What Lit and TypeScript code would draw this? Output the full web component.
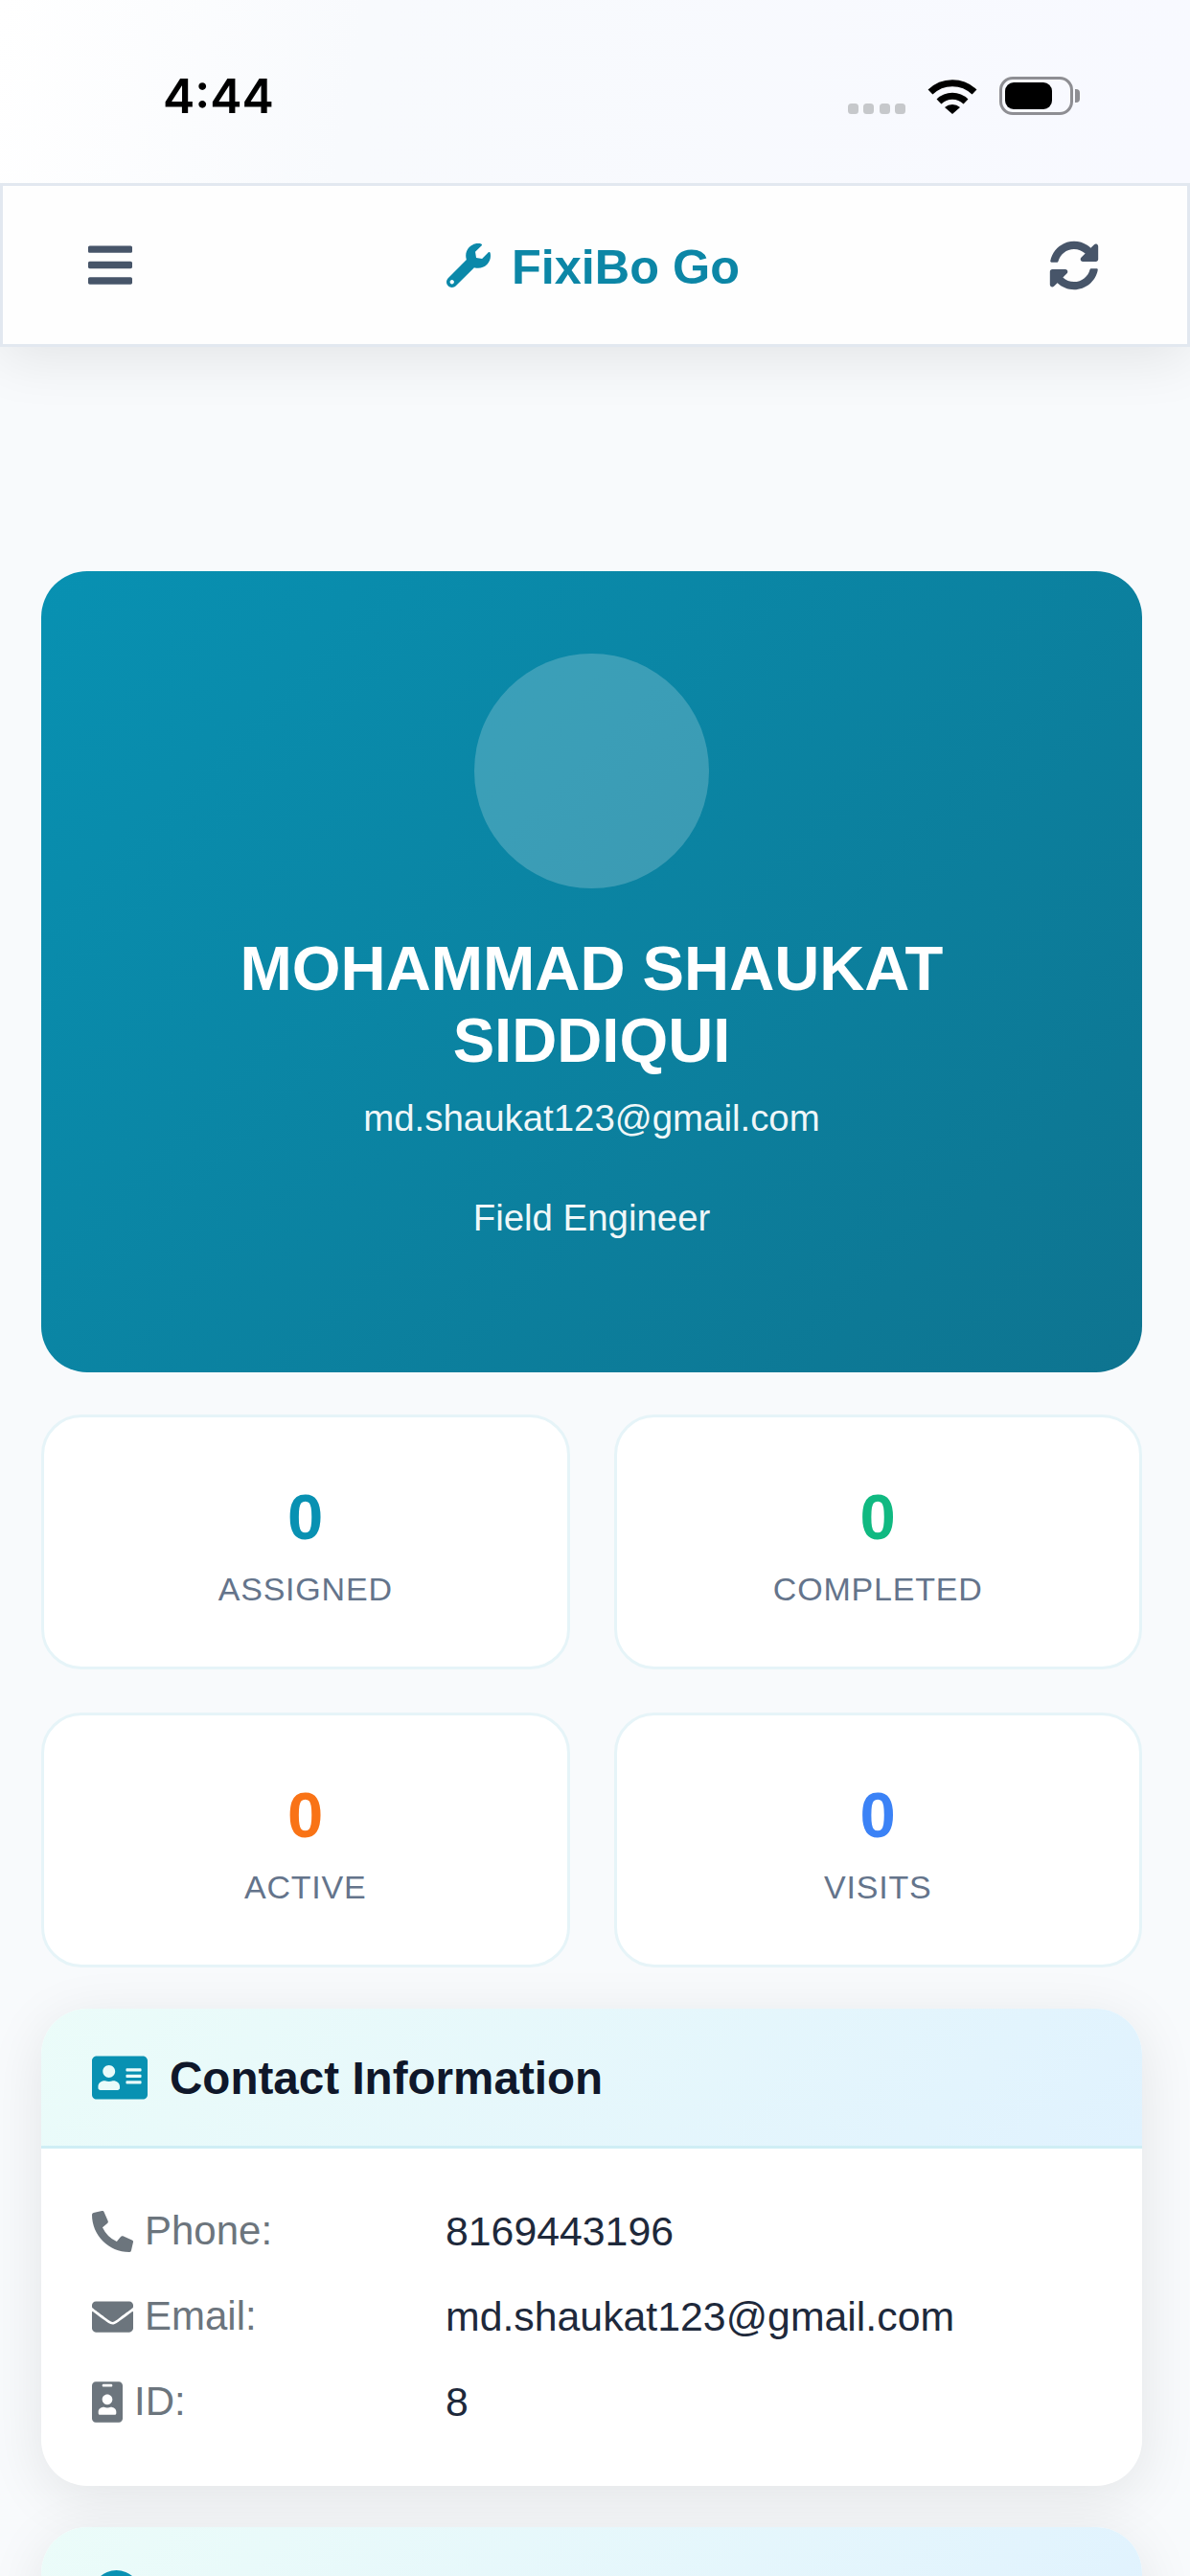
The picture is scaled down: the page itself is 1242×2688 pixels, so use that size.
import { LitElement, html, css, svg } from "lit";
import { customElement } from "lit/decorators.js";

const PATHS = {
  bars: "M16 132h416c8.837 0 16-7.163 16-16V76c0-8.837-7.163-16-16-16H16C7.163 60 0 67.163 0 76v40c0 8.837 7.163 16 16 16zm0 160h416c8.837 0 16-7.163 16-16v-40c0-8.837-7.163-16-16-16H16c-8.837 0-16 7.163-16 16v40c0 8.837 7.163 16 16 16zm0 160h416c8.837 0 16-7.163 16-16v-40c0-8.837-7.163-16-16-16H16c-8.837 0-16 7.163-16 16v40c0 8.837 7.163 16 16 16z",
  wrench: "M507.73 109.1c-2.24-9.03-13.54-12.09-20.12-5.51l-74.36 74.36-67.88-11.31-11.31-67.88 74.36-74.36c6.62-6.62 3.43-17.9-5.66-20.16-47.38-11.74-99.55.91-136.58 37.93-39.64 39.64-50.55 97.1-34.05 147.2L18.74 402.76c-24.99 24.99-24.99 65.51 0 90.5 24.99 24.99 65.51 24.99 90.5 0l213.21-213.21c50.12 16.71 107.47 5.68 147.37-34.22 37.07-37.07 49.7-89.32 37.91-136.73zM64 472c-13.25 0-24-10.75-24-24 0-13.26 10.75-24 24-24s24 10.74 24 24c0 13.25-10.75 24-24 24z",
  sync: "M370.72 133.28C339.458 104.008 298.888 87.962 255.848 88c-77.458.068-144.328 53.178-162.791 126.85-1.344 5.363-6.122 9.15-11.651 9.15H24.103c-7.498 0-13.194-6.807-11.807-14.176C33.933 94.924 134.813 8 256 8c66.448 0 126.791 26.136 171.315 68.685L463.03 40.97C478.149 25.851 504 36.559 504 57.941V192c0 13.255-10.745 24-24 24H345.941c-21.382 0-32.09-25.851-16.971-40.971l41.75-41.749zM32 296h134.059c21.382 0 32.09 25.851 16.971 40.971l-41.75 41.75c31.262 29.273 71.835 45.319 114.876 45.28 77.418-.07 144.315-53.144 162.787-126.849 1.344-5.363 6.122-9.15 11.651-9.15h57.304c7.498 0 13.194 6.807 11.807 14.176C478.067 417.076 377.187 504 256 504c-66.448 0-126.791-26.136-171.315-68.685L48.97 471.03C33.851 486.149 8 475.441 8 454.059V320c0-13.255 10.745-24 24-24z",
  phone: "M497.39 361.8l-112-48a24 24 0 0 0-28 6.9l-49.6 60.6A370.66 370.66 0 0 1 130.6 204.11l60.6-49.6a23.94 23.94 0 0 0 6.9-28l-48-112A24.16 24.16 0 0 0 122.6.61l-104 24A24 24 0 0 0 0 48c0 256.5 207.9 464 464 464a24 24 0 0 0 23.4-18.6l24-104a24.29 24.29 0 0 0-14.01-27.6z",
  envelope: "M502.3 190.8c3.9-3.1 9.7-.2 9.7 4.7V400c0 26.5-21.5 48-48 48H48c-26.5 0-48-21.5-48-48V195.6c0-5 5.7-7.8 9.7-4.7 22.4 17.4 52.1 39.5 154.1 113.6 21.1 15.4 56.7 47.8 92.2 47.6 35.7.3 72-32.8 92.3-47.6 102-74.1 131.6-96.3 154-113.7zM256 320c23.2.4 56.6-29.2 73.4-41.4 132.7-96.3 142.8-104.7 173.4-128.7 5.8-4.5 9.2-11.5 9.2-18.9v-19c0-26.5-21.5-48-48-48H48C21.5 64 0 85.5 0 112v19c0 7.4 3.4 14.3 9.2 18.9 30.6 23.9 40.7 32.4 173.4 128.7 16.8 12.2 50.2 41.8 73.4 41.4z",
  badge: "M336 0H48C21.5 0 0 21.5 0 48v416c0 26.5 21.5 48 48 48h288c26.5 0 48-21.5 48-48V48c0-26.5-21.5-48-48-48zM144 32h96c8.8 0 16 7.2 16 16s-7.2 16-16 16h-96c-8.8 0-16-7.2-16-16s7.2-16 16-16zm48 128c35.3 0 64 28.7 64 64s-28.7 64-64 64-64-28.7-64-64 28.7-64 64-64zm112 236.8c0 10.6-10 19.2-22.4 19.2H102.4C90 416 80 407.4 80 396.8v-19.2c0-31.8 30.1-57.6 67.2-57.6h5c12.3 5.1 25.7 8 39.8 8s27.6-2.9 39.8-8h5c37.1 0 67.2 25.8 67.2 57.6v19.2z",
  card: "M528 32H48C21.5 32 0 53.5 0 80v352c0 26.5 21.5 48 48 48h480c26.5 0 48-21.5 48-48V80c0-26.5-21.5-48-48-48zM176 128c35.3 0 64 28.7 64 64s-28.7 64-64 64-64-28.7-64-64 28.7-64 64-64zm112 236.8c0 10.6-10 19.2-22.4 19.2H86.4C74 384 64 375.4 64 364.8v-19.2c0-31.8 30.1-57.6 67.2-57.6h5c12.3 5.1 25.7 8 39.8 8s27.6-2.9 39.8-8h5c37.1 0 67.2 25.8 67.2 57.6v19.2zM512 312c0 4.4-3.6 8-8 8H360c-4.4 0-8-3.6-8-8v-16c0-4.4 3.6-8 8-8h144c4.4 0 8 3.6 8 8v16zm0-64c0 4.4-3.6 8-8 8H360c-4.4 0-8-3.6-8-8v-16c0-4.4 3.6-8 8-8h144c4.4 0 8 3.6 8 8v16zm0-64c0 4.4-3.6 8-8 8H360c-4.4 0-8-3.6-8-8v-16c0-4.4 3.6-8 8-8h144c4.4 0 8 3.6 8 8v16z",
};

function icon(name: keyof typeof PATHS, w: number, h: number, cls = "") {
  const vbW = name === "bars" ? 448 : name === "badge" ? 384 : name === "card" ? 576 : 512;
  return html`<svg class=${cls} width=${w} height=${h} viewBox="0 0 ${vbW} 512" fill="currentColor">
    ${svg`<path d=${PATHS[name]}></path>`}
  </svg>`;
}

const STATS = [
  { value: "0", label: "ASSIGNED", color: "#0891b2" },
  { value: "0", label: "COMPLETED", color: "#10b981" },
  { value: "0", label: "ACTIVE", color: "#f97316" },
  { value: "0", label: "VISITS", color: "#3b82f6" },
];

const CONTACT = [
  { ic: "phone", w: 43, label: "Phone:", value: "8169443196" },
  { ic: "envelope", w: 43, label: "Email:", value: "md.shaukat123@gmail.com" },
  { ic: "badge", w: 32, label: "ID:", value: "8" },
] as const;

@customElement("app-root")
export class AppRoot extends LitElement {
  static override styles = css`
    :host {
      display: block;
      height: 2688px;
      overflow: hidden;
      background: #f8fafc;
      font-family: "Liberation Sans", Arial, sans-serif;
    }

    .status {
      position: relative;
      z-index: 2;
      height: 191px;
      box-sizing: border-box;
      display: flex;
      justify-content: space-between;
      align-items: flex-end;
      padding: 0 115px 71px 170px;
      background: linear-gradient(100deg, #ffffff 0%, #f8fafd 30%, #f8f9ff 100%);
    }

    .time {
      font-family: Inter, sans-serif;
      font-weight: 600;
      font-size: 50px;
      line-height: 56px;
      margin-bottom: -8px;
      color: #000;
    }

    .status-icons {
      display: flex;
      align-items: flex-end;
    }

    .dots {
      display: flex;
      gap: 5.6px;
      margin-right: 23px;
      margin-bottom: 1px;
    }

    .dots span {
      width: 10.8px;
      height: 11px;
      border-radius: 3.5px;
      background: #c6c8cb;
    }

    .wifi {
      display: block;
      margin-right: 23px;
      margin-bottom: 1px;
    }

    .battery {
      box-sizing: border-box;
      width: 77px;
      height: 40px;
      border: 3px solid #8e8e93;
      border-radius: 14px;
      padding: 3px;
    }

    .battery span {
      display: block;
      width: 49px;
      height: 28px;
      border-radius: 9px;
      background: #000;
    }

    .nub {
      width: 5px;
      height: 14px;
      margin: 0 0 13px 2px;
      border-radius: 0 4px 4px 0;
      background: #8e8e93;
    }

    .topbar {
      position: relative;
      z-index: 1;
      box-sizing: border-box;
      height: 171px;
      display: flex;
      justify-content: space-between;
      align-items: center;
      padding: 0 92px 0 89px;
      background: #fefefe;
      border: 3px solid #e2e8f0;
      box-shadow: 0 12px 60px rgba(0, 0, 0, 0.09);
      color: #475569;
    }

    .brand {
      display: flex;
      align-items: center;
      gap: 22px;
      margin-left: 5px;
      font-weight: 700;
      font-size: 50.4px;
      line-height: 60px;
      color: #0c86a6;
    }

    .brand svg {
      color: #0b88a9;
    }

    .brand span {
      padding-top: 5px;
    }

    .page {
      padding: 234px 50px 0 43px;
    }

    .hero {
      display: flex;
      flex-direction: column;
      align-items: center;
      padding: 86px 86px 139px;
      border-radius: 48px;
      background: linear-gradient(135deg, #0891b2, #0e7490);
      color: #fff;
      text-align: center;
    }

    .avatar {
      width: 245px;
      height: 245px;
      border-radius: 50%;
      background: rgba(255, 255, 255, 0.2);
      margin-bottom: 46px;
    }

    .name {
      font-weight: 700;
      font-size: 65.2px;
      line-height: 75px;
      margin-bottom: 22px;
    }

    .sub {
      font-size: 38.4px;
      line-height: 44px;
      color: rgba(255, 255, 255, 0.95);
    }

    .sub + .sub {
      margin-top: 60px;
    }

    .stats {
      display: grid;
      grid-template-columns: 1fr 1fr;
      column-gap: 46px;
      row-gap: 45px;
      margin-top: 44px;
    }

    .stat {
      box-sizing: border-box;
      height: 266px;
      display: flex;
      flex-direction: column;
      align-items: center;
      padding-top: 64px;
      background: #fff;
      border: 3px solid #e6f4f8;
      border-radius: 42px;
    }

    .stat-value {
      font-weight: 700;
      font-size: 67px;
      line-height: 80px;
      margin-bottom: 13px;
    }

    .stat-label {
      font-size: 34px;
      line-height: 44px;
      letter-spacing: 0.8px;
      color: #64748b;
    }

    .card {
      margin-top: 43px;
      border-radius: 48px;
      background: #fff;
      overflow: hidden;
      box-shadow: 0 12px 60px rgba(0, 0, 0, 0.09);
    }

    .card-head {
      box-sizing: border-box;
      height: 146px;
      display: flex;
      align-items: center;
      gap: 23px;
      padding: 0 53px;
      background: linear-gradient(135deg, #ebfcf9, #e0f2fe);
      border-bottom: 3px solid #cfeef5;
      color: #0891b2;
    }

    .card-title {
      font-weight: 700;
      font-size: 47.6px;
      line-height: 56px;
      padding-top: 3px;
      color: #0f172a;
    }

    .card-body {
      display: flex;
      flex-direction: column;
      gap: 37px;
      padding: 60px 53px 62px;
    }

    .row {
      display: flex;
      align-items: center;
      height: 52px;
      font-size: 42px;
    }

    .row-label {
      width: 369px;
      display: flex;
      align-items: center;
      gap: 12px;
      color: #6c757d;
    }

    .row-value {
      font-size: 42.8px;
      color: #1e293b;
    }

    .next-head {
      align-items: flex-start;
      padding-top: 45px;
    }

    .dot-icon {
      width: 51px;
      height: 51px;
      border-radius: 50%;
      background: #0891b2;
    }
  `;

  override render() {
    return html`
      <div class="status">
        <div class="time">4:44</div>
        <div class="status-icons">
          <div class="dots"><span></span><span></span><span></span><span></span></div>
          <svg class="wifi" width="52" height="38" viewBox="0 0 52 38">
            <path d="M3 15 A33 33 0 0 1 49 15" fill="none" stroke="#000" stroke-width="7"></path>
            <path d="M12 25 A20 20 0 0 1 40 25" fill="none" stroke="#000" stroke-width="7"></path>
            <path d="M18 31 A12 12 0 0 1 34 31 L26 38 Z" fill="#000"></path>
          </svg>
          <div class="battery"><span></span></div>
          <div class="nub"></div>
        </div>
      </div>

      <div class="topbar">
        ${icon("bars", 46, 53)}
        <div class="brand">${icon("wrench", 46, 46)}<span>FixiBo Go</span></div>
        ${icon("sync", 52, 52)}
      </div>

      <div class="page">
        <div class="hero">
          <div class="avatar"></div>
          <div class="name">MOHAMMAD SHAUKAT SIDDIQUI</div>
          <div class="sub">md.shaukat123@gmail.com</div>
          <div class="sub">Field Engineer</div>
        </div>

        <div class="stats">
          ${STATS.map(
            (s) => html`
              <div class="stat">
                <div class="stat-value" style="color: ${s.color}">${s.value}</div>
                <div class="stat-label">${s.label}</div>
              </div>
            `
          )}
        </div>

        <div class="card">
          <div class="card-head">
            ${icon("card", 58, 52)}
            <div class="card-title">Contact Information</div>
          </div>
          <div class="card-body">
            ${CONTACT.map(
              (c) => html`
                <div class="row">
                  <div class="row-label">${icon(c.ic, c.w, 43)}<span>${c.label}</span></div>
                  <div class="row-value">${c.value}</div>
                </div>
              `
            )}
          </div>
        </div>

        <div class="card">
          <div class="card-head next-head"><div class="dot-icon"></div></div>
        </div>
      </div>
    `;
  }
}
